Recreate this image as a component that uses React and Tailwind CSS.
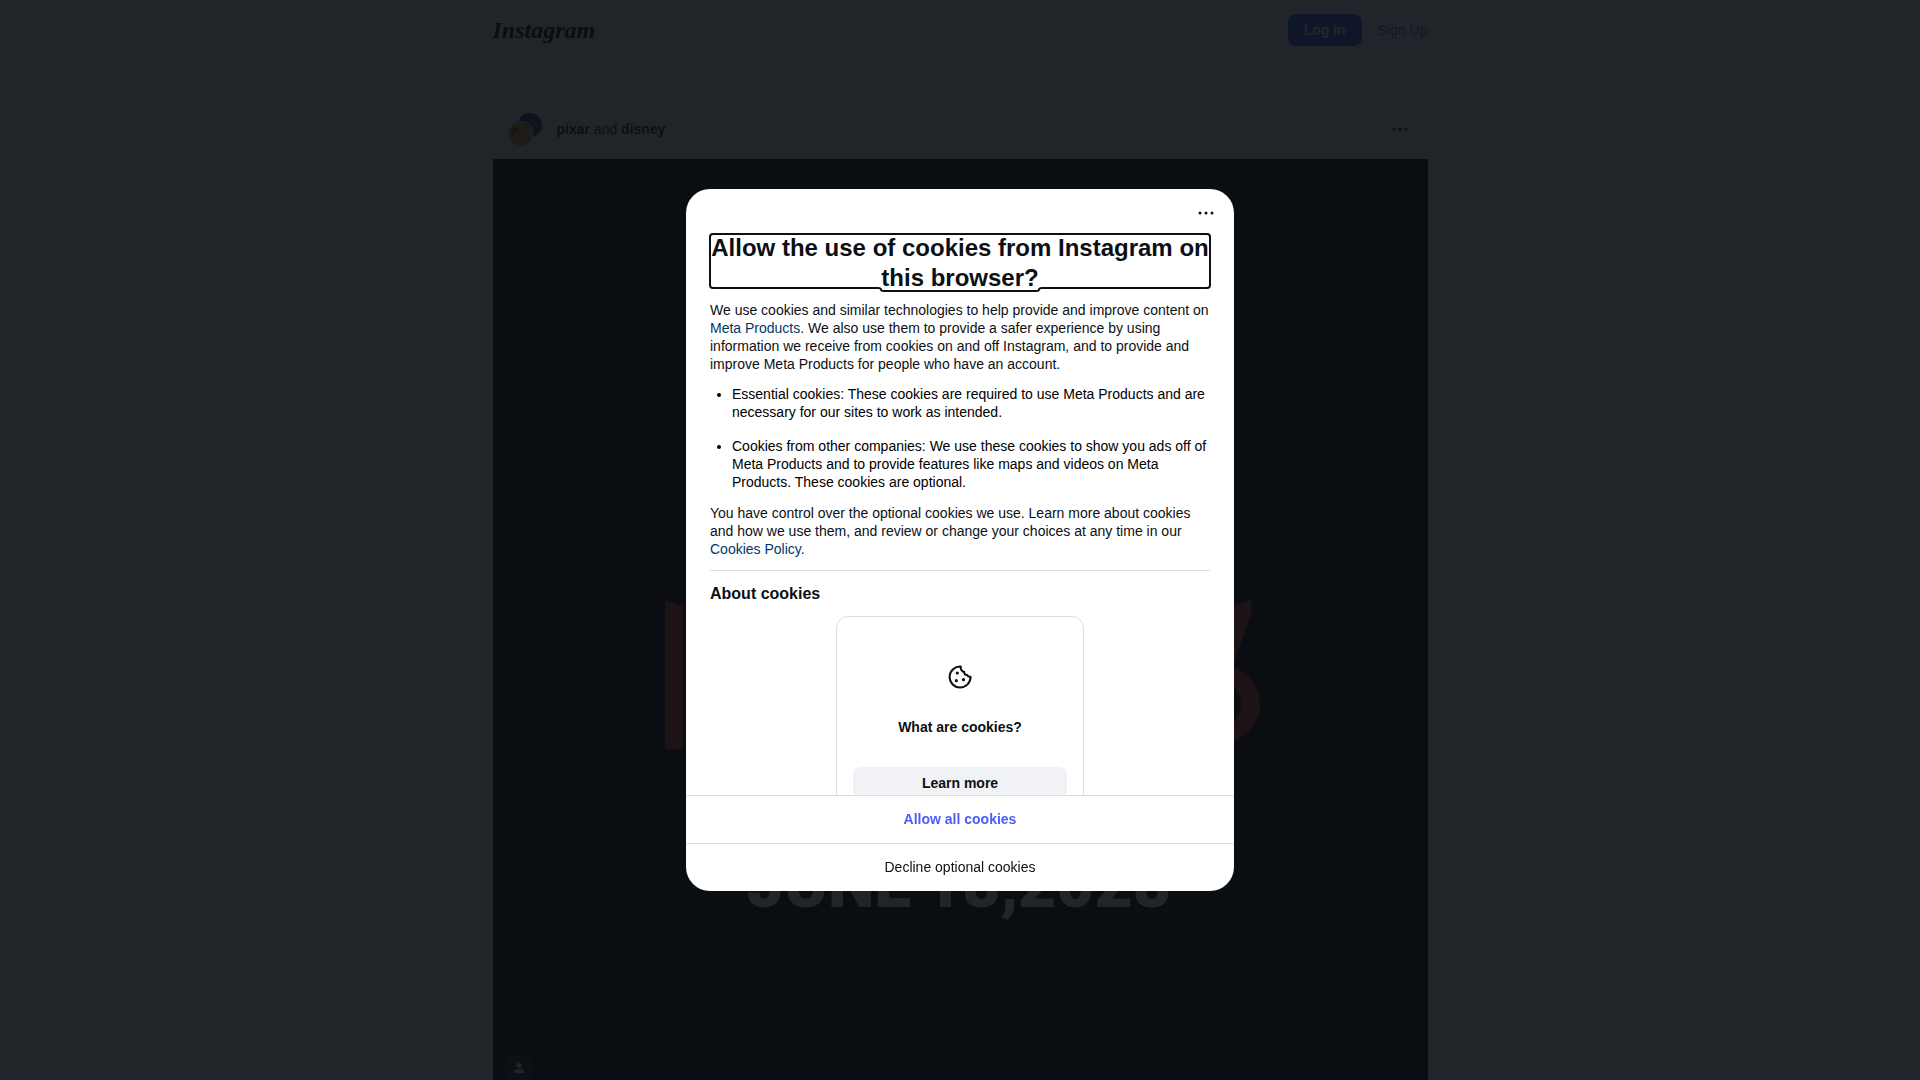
import React, { useEffect, useRef } from "react";

export default function App() {
  return (
    <div className="h-screen overflow-hidden bg-white font-['Liberation_Sans',Arial,sans-serif] text-sm text-[#0c1014]">
      <SiteHeader />
      <main className="mx-auto max-w-[935px] pt-10">
        <Post />
      </main>
      <CookieDialog />
    </div>
  );
}

function SiteHeader() {
  return (
    <header className="h-15 border-b border-[#dbdfe4]">
      <div className="mx-auto flex h-full max-w-[935px] items-center justify-between">
        <a href="#home" className="font-['Liberation_Serif',serif] text-2xl font-bold text-black italic">
          Instagram
        </a>
        <div className="flex items-center gap-4">
          <button className="h-8 rounded-lg bg-[#4a5df9] px-4 font-semibold text-white">Log In</button>
          <a href="#signup" className="text-[#4a5df9]">Sign Up</a>
        </div>
      </div>
    </header>
  );
}

function Post() {
  return (
    <article>
      <div className="flex h-[59px] items-center justify-between pr-4 pb-0.5 pl-3">
        <div className="flex items-center gap-3">
          <Avatars />
          <p>
            <a href="#pixar" className="font-semibold">pixar</a> and{" "}
            <a href="#disney" className="font-semibold">disney</a>
          </p>
        </div>
        <button aria-label="More options">
          <Dots />
        </button>
      </div>
      <div className="relative">
        <Poster />
        <button
          aria-label="Tagged accounts"
          className="absolute bottom-3 left-3 flex size-7 items-center justify-center rounded-full bg-[#262626]"
        >
          <svg viewBox="0 0 24 24" className="size-2.5 fill-white">
            <circle cx="12" cy="6" r="6" />
            <path d="M2 24a2 2 0 0 1-2-2v-1c0-4 4-6 8-6h8c4 0 8 2 8 6v1a2 2 0 0 1-2 2Z" />
          </svg>
        </button>
      </div>
    </article>
  );
}

function Avatars() {
  return (
    <svg viewBox="0 0 40 40" className="size-10" aria-hidden="true">
      <circle cx="25" cy="16" r="12" fill="#2c3566" />
      <path d="M18 16c4-5 11-5 14 1M24 18h10" stroke="#8f99cc" strokeWidth="1" fill="none" />
      <circle cx="15.500" cy="25" r="13" fill="#fff" />
      <circle cx="15.500" cy="25" r="12" fill="#e0b02e" />
      <path d="M13 13.300A12 12 0 0 1 27 22c-3-5-8-8-14-8.700Z" fill="#3a6fb0" />
      <path d="M27.300 23a12 12 0 0 1-13 14c7-3 11-8 13-14Z" fill="#3a9bd0" />
      <path d="m8 15 3 4 5-1-3 4 2 4-5-1-4 4v-5l-3-2 5-2Z" fill="#cf3b2f" />
    </svg>
  );
}

function Poster() {
  return (
    <svg viewBox="0 0 935 935" className="block aspect-square w-full bg-black" role="img" aria-label="Film poster">
      <g fill="#d2342f">
        <path d="M172 441l18 6v143h-18Z" />
        <path d="M700 461l58-20 1 12-20 55c18 6 28 20 28 38 0 24-25 43-57 43v-18c22 0 38-8 38-26s-16-26-38-26Z" />
      </g>
      <text y="748" className="fill-white font-['Roboto',sans-serif] text-[66px] font-black">
        <tspan x="254">JUNE </tspan>
        <tspan x="431">18, </tspan>
        <tspan x="525">2028</tspan>
      </text>
    </svg>
  );
}

function CookieDialog() {
  const titleRef = useRef(null);

  // Move focus to the title so screen readers announce the dialog
  useEffect(() => {
    titleRef.current?.focus();
  }, []);

  return (
    <div className="fixed inset-0 flex items-center justify-center bg-[#0b0f14]/91">
      <div
        role="dialog"
        aria-modal="true"
        aria-labelledby="cookie-title"
        className="flex h-[65vh] w-full max-w-[548px] flex-col overflow-hidden rounded-3xl bg-white"
      >
        <div className="flex h-10 shrink-0 items-end justify-end px-4 pb-1">
          <button aria-label="More options">
            <Dots />
          </button>
        </div>

        <div className="min-h-0 flex-1 overflow-hidden px-6 pt-[5px] leading-[18px]">
          <h2
            id="cookie-title"
            ref={titleRef}
            tabIndex={-1}
            className="flow-root text-center text-2xl leading-[30px] font-bold outline-[#101010] before:-mt-px before:block before:content-[''] after:-mt-[5px] after:block after:content-['']"
          >
            Allow the use of cookies from Instagram on this browser?
          </h2>
          <p className="mt-[13px]">
            We use cookies and similar technologies to help provide and improve content on{" "}
            <PolicyLink href="#products">Meta Products</PolicyLink>. We also use them to provide a safer
            experience by using information we receive from cookies on and off Instagram, and to provide
            and improve Meta Products for people who have an account.
          </p>
          <ul className="mt-3 flex list-disc flex-col gap-4 pl-[22px] text-black">
            <li>
              Essential cookies: These cookies are required to use Meta Products and are necessary for our
              sites to work as intended.
            </li>
            <li>
              Cookies from other companies: We use these cookies to show you ads off of Meta Products and to
              provide features like maps and videos on Meta Products. These cookies are optional.
            </li>
          </ul>
          <p className="mt-[13px]">
            You have control over the optional cookies we use. Learn more about cookies and how we use them,
            and review or change your choices at any time in our{" "}
            <PolicyLink href="#policy">Cookies Policy</PolicyLink>.
          </p>

          <hr className="mt-3 border-[#dbdfe4]" />

          <h3 className="mt-[11px] text-base leading-6 font-bold">About cookies</h3>
          <div className="mx-auto mt-[10px] flex max-w-[248px] flex-col items-center rounded-xl border border-[#dbdfe4] px-4 pt-12 pb-4">
            <CookieIcon />
            <h4 className="mt-7 leading-5 font-bold">What are cookies?</h4>
            <button className="mt-[30px] h-8 w-full rounded-lg bg-[#f0f2f5] font-semibold">Learn more</button>
          </div>
        </div>

        <button className="h-12 shrink-0 border-t border-[#dbdfe4] pb-0.5 font-bold text-[#4a5df9]">
          Allow all cookies
        </button>
        <button className="h-12 shrink-0 border-t border-[#dbdfe4] pb-0.5">Decline optional cookies</button>
      </div>
    </div>
  );
}

function PolicyLink({ href, children }) {
  return (
    <a href={href} className="text-[#00376b]">
      {children}
    </a>
  );
}

function Dots() {
  return (
    <svg viewBox="0 0 24 24" className="size-6 fill-current" aria-hidden="true">
      <circle cx="6" cy="12" r="1.5" />
      <circle cx="12" cy="12" r="1.5" />
      <circle cx="18" cy="12" r="1.5" />
    </svg>
  );
}

function CookieIcon() {
  return (
    <svg
      viewBox="0 0 24 24"
      className="size-6"
      fill="none"
      stroke="currentColor"
      strokeWidth="2"
      strokeLinejoin="round"
      aria-hidden="true"
    >
      <path d="M12.700 1.500a10.500 10.500 0 1 0 9.900 10.300c-1.800.2-3-.5-3.400-1.800-2 .1-3.100-1-3-3-2.300-.6-3.600-2.600-3.500-5.500Z" />
      <g fill="currentColor" stroke="none">
        <circle cx="9.300" cy="8" r="1.600" />
        <circle cx="8.300" cy="15.700" r="1.600" />
        <circle cx="15.500" cy="14.700" r="1.600" />
      </g>
    </svg>
  );
}
